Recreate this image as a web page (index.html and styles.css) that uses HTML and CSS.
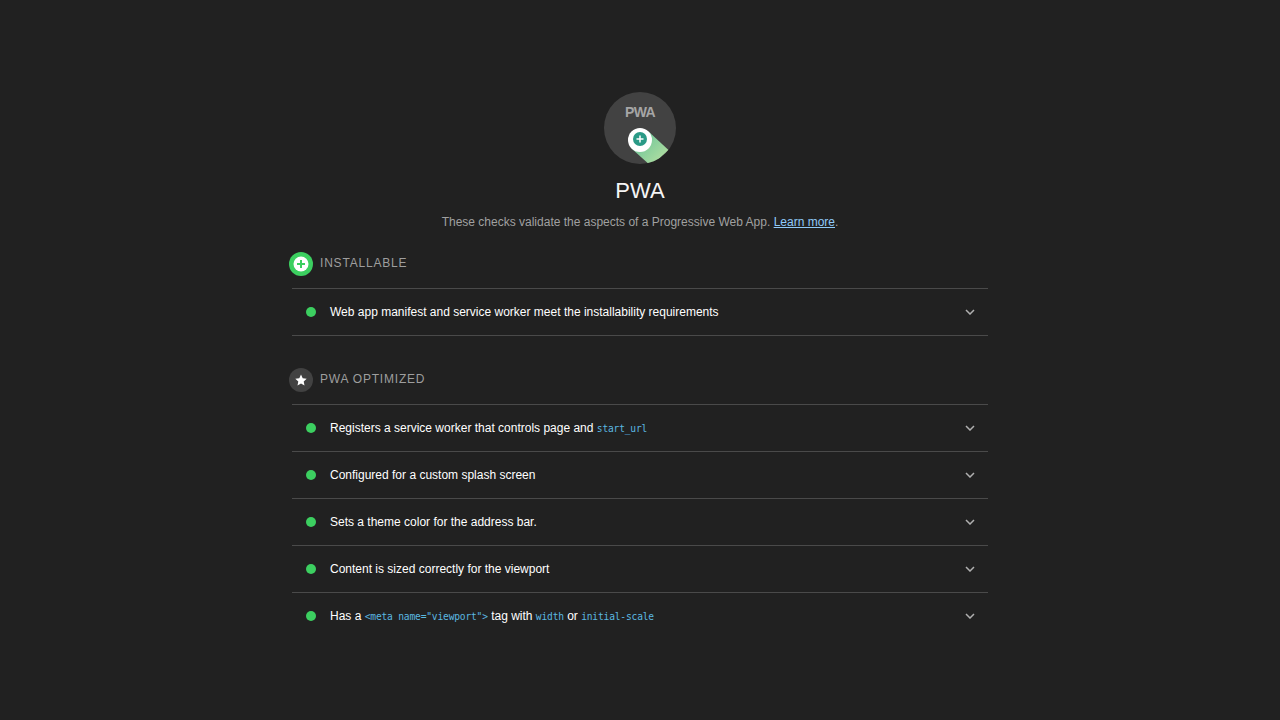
FILE: index.html
```html
<!DOCTYPE html>
<html>
<head>
    <title>PWA</title>
    <link rel="stylesheet" href="styles.css">
</head>
<body>
    <div class="container">
        <div class="category-header">
            <svg class="gauge" width="72" height="72" viewBox="0 0 72 72">
                <defs>
                    <linearGradient id="tail" x1="32" y1="38" x2="58" y2="64" gradientUnits="userSpaceOnUse">
                        <stop offset="0" stop-color="#5fbf98"/>
                        <stop offset="1" stop-color="#a8dba0"/>
                    </linearGradient>
                    <clipPath id="disc"><circle cx="36" cy="36" r="36"/></clipPath>
                </defs>
                <circle cx="36" cy="36" r="36" fill="#424242"/>
                <path clip-path="url(#disc)" d="M44.500 39.500 L64.500 58 L47 74 L27.500 56.500 Z" fill="url(#tail)"/>
                <text class="gauge-text" x="36" y="25" text-anchor="middle">PWA</text>
                <circle cx="36" cy="48" r="12" fill="#fff"/>
                <circle cx="36" cy="47" r="7" fill="#2a9a86"/>
                <path d="M36 43.500v7M32.500 47h7" stroke="#fff" stroke-width="1.500"/>
            </svg>
            <h1>PWA</h1>
            <p class="description">These checks validate the aspects of a Progressive Web App. <a href="#">Learn more</a>.</p>
        </div>

        <div class="group group-single">
            <div class="group-header">
                <svg class="group-icon" width="24" height="24" viewBox="0 0 24 24">
                    <circle cx="12" cy="12" r="12" fill="#3ccf60"/>
                    <circle cx="12" cy="12" r="7.500" fill="#fff"/>
                    <path d="M12 8v8M8 12h8" stroke="#3ccf60" stroke-width="2"/>
                </svg>
                <span>INSTALLABLE</span>
            </div>
            <div class="audit">
                <span class="dot"></span>
                <span class="audit-title">Web app manifest and service worker meet the installability requirements</span>
                <svg class="chevron" width="10" height="6" viewBox="0 0 10 6"><path d="M1 1l4 4 4-4" /></svg>
            </div>
        </div>

        <div class="group">
            <div class="group-header">
                <svg class="group-icon" width="24" height="24" viewBox="0 0 24 24">
                    <circle cx="12" cy="12" r="12" fill="#424242"/>
                    <path d="M12 6.500l1.700 3.700 4 .5-3 2.700.8 4-3.500-2-3.500 2 .8-4-3-2.700 4-.5z" fill="#fff"/>
                </svg>
                <span>PWA OPTIMIZED</span>
            </div>
            <div class="audit">
                <span class="dot"></span>
                <span class="audit-title">Registers a service worker that controls page and <code>start_url</code></span>
                <svg class="chevron" width="10" height="6" viewBox="0 0 10 6"><path d="M1 1l4 4 4-4" /></svg>
            </div>
            <div class="audit">
                <span class="dot"></span>
                <span class="audit-title">Configured for a custom splash screen</span>
                <svg class="chevron" width="10" height="6" viewBox="0 0 10 6"><path d="M1 1l4 4 4-4" /></svg>
            </div>
            <div class="audit">
                <span class="dot"></span>
                <span class="audit-title">Sets a theme color for the address bar.</span>
                <svg class="chevron" width="10" height="6" viewBox="0 0 10 6"><path d="M1 1l4 4 4-4" /></svg>
            </div>
            <div class="audit">
                <span class="dot"></span>
                <span class="audit-title">Content is sized correctly for the viewport</span>
                <svg class="chevron" width="10" height="6" viewBox="0 0 10 6"><path d="M1 1l4 4 4-4" /></svg>
            </div>
            <div class="audit">
                <span class="dot"></span>
                <span class="audit-title">Has a <code>&lt;meta name="viewport"&gt;</code> tag with <code>width</code> or <code>initial-scale</code></span>
                <svg class="chevron" width="10" height="6" viewBox="0 0 10 6"><path d="M1 1l4 4 4-4" /></svg>
            </div>
        </div>
    </div>
</body>
</html>
```

FILE: styles.css
```css
* {
    margin: 0;
    padding: 0;
    box-sizing: border-box;
}

html, body {
    height: 100%;
}

body {
    background: #212121;
    font-family: "Liberation Sans", Arial, sans-serif;
    font-size: 12px;
    color: #f5f5f5;
    overflow: hidden;
}

.container {
    width: 696px;
    margin: 0 auto;
    padding-top: 92px;
}

.category-header {
    display: flex;
    flex-direction: column;
    align-items: center;
    margin-bottom: 9px;
}

.gauge {
    display: block;
}

.gauge-text {
    font-family: "Liberation Sans", Arial, sans-serif;
    font-size: 14px;
    font-weight: 700;
    letter-spacing: -0.7px;
    fill: #a6a6a6;
}

h1 {
    font-size: 22px;
    font-weight: 400;
    line-height: 28px;
    margin-top: 13px;
}

.description {
    color: #a0a0a0;
    line-height: 18px;
    margin-top: 8px;
}

.description a {
    color: #90caf9;
}

.group {
    margin-bottom: 20px;
}

.group-header {
    display: flex;
    align-items: flex-start;
    height: 48px;
    margin-left: -3px;
    color: #9e9e9e;
    letter-spacing: 0.8px;
    line-height: 22px;
    padding-top: 12px;
}

.group-icon {
    margin-right: 7px;
    flex-shrink: 0;
}

.audit {
    display: flex;
    align-items: center;
    height: 47px;
    padding-left: 14px;
    padding-right: 13px;
    border-top: 1px solid #4a4a4a;
}

.group-single .audit {
    border-bottom: 1px solid #4a4a4a;
    height: 48px;
}

.dot {
    width: 10px;
    height: 10px;
    border-radius: 50%;
    background: #3ccf60;
    flex-shrink: 0;
    margin-right: 14px;
}

.audit-title {
    flex: 1;
    color: #fff;
}

code {
    font-family: "DejaVu Sans Mono", monospace;
    font-size: 9.6px;
    letter-spacing: -0.18px;
    color: #5bb8e0;
}

.chevron {
    flex-shrink: 0;
}

.chevron path {
    fill: none;
    stroke: #b0b0b0;
    stroke-width: 1.5;
}
```
